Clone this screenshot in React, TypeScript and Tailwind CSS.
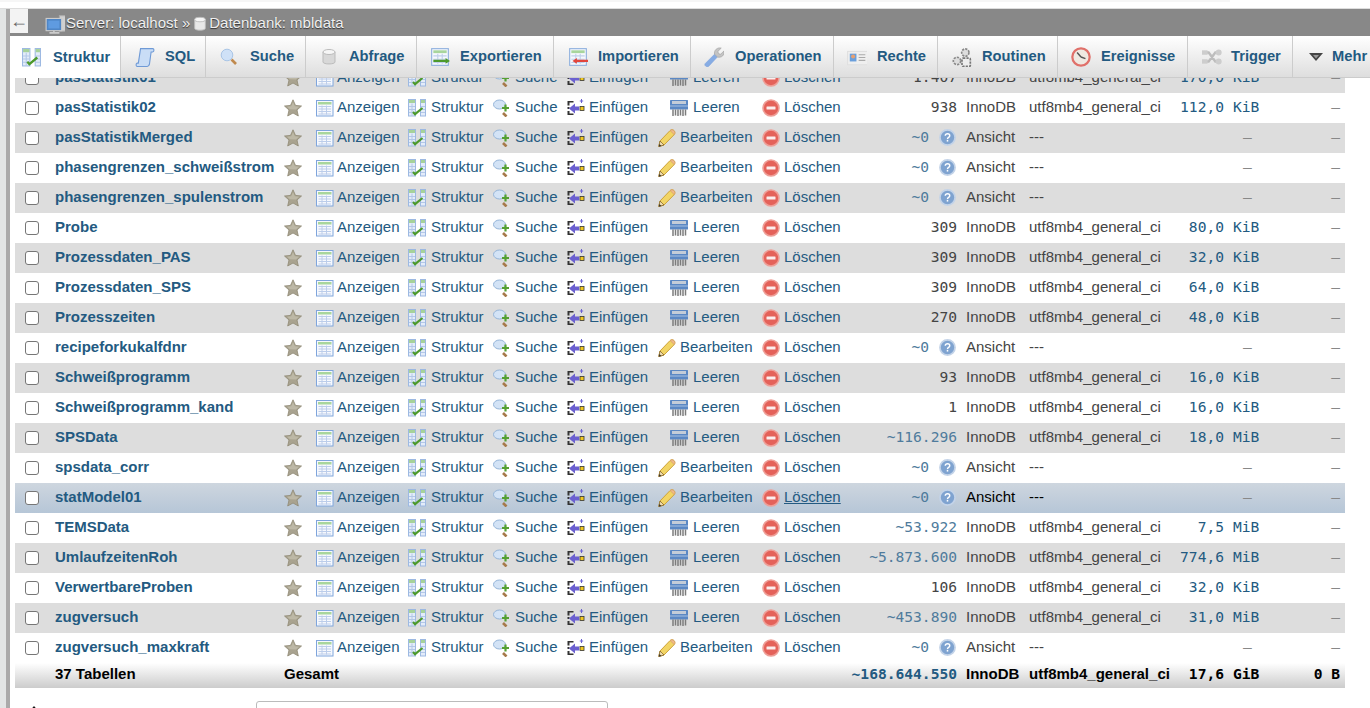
import type { ReactNode } from "react";

const Svg = ({ size = 18, children }: { size?: number; children: ReactNode }) => (
  <svg width={size} height={size} viewBox="0 0 18 18" className="shrink-0">
    {children}
  </svg>
);

// row action icons
const Star = () => (
  <Svg>
    <path d="M9 .8l2.500 5.600 6 .6-4.500 4 1.300 6L9 14l-5.300 3 1.300-6L.5 7l6-.6z" fill="#a9a390" stroke="#8f8973" strokeWidth=".8" />
    <path d="M9 3l1.800 4.300 4.300.4-3.200 2.800-5.900-.2-3-2.600 4.200-.4z" fill="#bdb8a6" />
  </Svg>
);

const Browse = () => (
  <Svg>
    <rect x=".5" y="1.500" width="16.500" height="15.500" fill="#f7f9fd" stroke="#7fa5dc" />
    <rect x="2" y="3" width="13.500" height="2.500" fill="#a9d69c" />
    <path d="M2.500 7.500h12.500M2.500 10h12.500M2.500 12.500h12.500M2.500 15h12.500M6 6.500v9M10.500 6.500v9" stroke="#bccdea" />
  </Svg>
);

const Props = ({ size = 18 }: { size?: number }) => (
  <Svg size={size}>
    <rect x=".5" y=".5" width="7" height="16.500" fill="#e3ecf9" stroke="#9db9e2" />
    <rect x="12.500" y=".5" width="5" height="16.500" fill="#e3ecf9" stroke="#9db9e2" />
    <rect x="1" y="1" width="6" height="3" fill="#a6d29a" />
    <rect x="13" y="1" width="4" height="3" fill="#a6d29a" />
    <path d="M4 4.500v12M1 7.500h6M1 10.500h6M1 13.500h6M13 7.500h4M13 10.500h4M13 13.500h4" stroke="#b3c8e8" />
    <path d="M5 13l2 2.200L14.500 9" fill="none" stroke="#4d9a2c" strokeWidth="2.200" />
  </Svg>
);

const Select = () => (
  <Svg>
    <ellipse cx="6.500" cy="5.500" rx="6" ry="4.500" fill="#d3e3f6" stroke="#94b4d8" />
    <path d="M10 14l3.500 3.500" stroke="#a6794a" strokeWidth="2.600" />
    <path d="M12.500 5.500v7M9 9h7" stroke="#54a032" strokeWidth="2.200" />
  </Svg>
);

const Insert = () => (
  <Svg>
    <path d="M.5 2h6v1.500h-4v3H.5zM.5 8h2v2h-2zM.5 12h2v2.500h4V16h-6z" fill="#333" />
    <path d="M2 9.500l6-5v3h4v4H8v3z" fill="#6b60d0" />
    <rect x="13" y="7.500" width="4" height="4" fill="#f0c820" stroke="#333" strokeWidth=".8" />
    <path d="M14.500 0v4M12.800 2h3.400" stroke="#6b60d0" />
  </Svg>
);

const Empty = () => (
  <Svg>
    <rect x="0" y="1" width="18" height="9.500" rx=".5" fill="#5b88c4" />
    <rect x="2" y="2" width="14" height="3" fill="#c3ccd8" />
    <rect x="0" y="6.500" width="18" height="1" fill="#a7c0e0" />
    <path d="M3 10.500v6.500M5.500 10.500v6M8 10.500v6.500M10.500 10.500v6M13 10.500v6.500M15.500 10.500v6" stroke="#7c7c7c" strokeWidth="1.500" />
  </Svg>
);

const Pencil = () => (
  <Svg>
    <path d="M.8 17.500l1.200-5.500L12 1.600c1.200-1.200 3-1 4 0s1.200 2.800.2 4L6 16z" fill="#f2d565" stroke="#cda23a" />
    <path d="M12 1.600l4.200 4c1-1.200.8-3-.2-4s-2.800-1.200-4 0z" fill="#efb98a" stroke="#d39b62" strokeWidth=".6" />
    <path d="M.8 17.500l1.200-5.500 4 4z" fill="#f0dcae" stroke="#7a5a20" strokeWidth=".7" />
    <path d="M.8 17.500l.6-2.500 1.900 1.900z" fill="#333" />
  </Svg>
);

const Drop = () => (
  <Svg>
    <circle cx="9" cy="9" r="8" fill="#e4625a" stroke="#ee9f98" strokeWidth="1.600" />
    <rect x="4.500" y="7.500" width="9" height="3" rx=".5" fill="#fbeeee" />
  </Svg>
);

const Help = () => (
  <Svg size={17}>
    <circle cx="9" cy="9" r="8" fill="#7fa3d0" stroke="#c3d3e8" strokeWidth="1.800" />
    <path d="M6.600 7.200c.2-2.800 4.800-2.800 4.800 0 0 1.700-2.400 1.700-2.400 3.300" fill="none" stroke="#fff" strokeWidth="1.500" />
    <rect x="8.200" y="11.500" width="1.600" height="1.800" fill="#fff" />
  </Svg>
);

// tab icons
const Scroll = () => (
  <Svg size={20}>
    <path d="M5 1.500h11c1.300 0 1.500 2.500 0 3h-1.500L13 15.500c-.3 1.500-1 2-2 2H2c-1.200 0-1.500-2.300 0-3h1z" fill="#c9ddf6" stroke="#6f9ad6" />
  </Svg>
);

const Magnifier = () => (
  <Svg size={18}>
    <circle cx="7" cy="7" r="5.800" fill="#cfe1f7" stroke="#a9c5e6" />
    <path d="M11.500 11.500l4.500 4.500" stroke="#c08a4e" strokeWidth="2.600" />
  </Svg>
);

const Cylinder = ({ size = 18, light = false }: { size?: number; light?: boolean }) => (
  <Svg size={size}>
    <path d="M3 4v10c0 2.600 12 2.600 12 0V4z" fill={light ? "#e8e8e8" : "#d8d8d8"} stroke="#bbb" />
    <ellipse cx="9" cy="4" rx="6" ry="2.500" fill="#f6f6f6" stroke="#bbb" />
  </Svg>
);

const SheetArrow = ({ color, out }: { color: string; out: boolean }) => (
  <Svg size={20}>
    <rect x="1.500" y="1.500" width="15" height="15" fill="#f5f8fd" stroke="#8fb0de" />
    <rect x="3" y="3" width="12" height="2.500" fill="#a8d59c" />
    <path d="M3 8h12M3 11h12M3 14h12M7 6v9M11 6v9" stroke="#c0d0ea" />
    {out ? (
      <path d="M3 11.500h11V10l4 2.500-4 2.500v-1.500H3z" fill={color} />
    ) : (
      <path d="M18 11.500H8V10l-4 2.500L8 15v-1.500h10z" fill={color} />
    )}
  </Svg>
);

const Wrench = () => (
  <Svg size={20}>
    <path d="M1 15L9.500 6.500l2.500 2.500-8 8.500c-1.500 1-4-.8-3-2.500z" fill="#86ace4" stroke="#7ba2dc" strokeWidth=".6" />
    <path d="M9.500 6.500c-.8-3.500 2.500-6.500 6-5.500l-3 3 .5 2 2 .5 3-3c.8 3.800-2.300 6.500-5.800 5.500z" fill="#c4c4c4" stroke="#a2a2a2" strokeWidth=".6" />
  </Svg>
);

const IdCard = () => (
  <Svg size={20}>
    <rect x=".5" y="4" width="18" height="12" fill="#efefef" stroke="#e0e0e0" />
    <rect x="2.500" y="6" width="6" height="7" fill="#6a9fdc" />
    <circle cx="5.500" cy="8.500" r="1.800" fill="#e8a070" />
    <path d="M10.500 7h6M10.500 9.500h6M10.500 12h6" stroke="#aaa" />
  </Svg>
);

const Gears = () => (
  <Svg size={20}>
    <circle cx="12" cy="5" r="3.300" fill="#ddd" stroke="#888" strokeWidth="1.500" strokeDasharray="2 1" />
    <circle cx="4.500" cy="12.500" r="3.300" fill="#ddd" stroke="#888" strokeWidth="1.500" strokeDasharray="2 1" />
    <rect x="9" y="10" width="7.500" height="7.500" rx="1" fill="#eee" stroke="#777" strokeWidth="1.500" strokeDasharray="2 1" />
  </Svg>
);

const Clock = () => (
  <Svg size={20}>
    <circle cx="9" cy="9" r="7.800" fill="#efe9e2" stroke="#e0706a" strokeWidth="2" />
    <path d="M9 9L5.500 5M9 9l4 1.500" stroke="#555" strokeWidth="1.300" />
  </Svg>
);

const TriggerIcon = () => (
  <Svg size={20}>
    <path d="M3 5h3l6 8h3M3 13h3l6-8h3" fill="none" stroke="#bdbdbd" strokeWidth="2.200" />
    <rect x="0" y="3" width="5" height="4" fill="#cdcdcd" />
    <rect x="0" y="11" width="5" height="4" fill="#cdcdcd" />
    <circle cx="15" cy="5" r="2.700" fill="#cdcdcd" />
    <circle cx="15" cy="13" r="2.700" fill="#cdcdcd" />
  </Svg>
);

const Server = () => (
  <Svg size={20}>
    <rect x="13" y="1.500" width="5.500" height="14" fill="#d0d0d0" stroke="#aaa" />
    <rect x="1" y="4" width="14" height="11" fill="#4f86c6" stroke="#ccc" />
    <rect x="3" y="6" width="10" height="7" fill="#5f9be0" />
    <path d="M4 17h9M8 15v2" stroke="#ccc" strokeWidth="1.500" />
  </Svg>
);

const tabs: { label: string; width: string; gap: string; pad: string; icon: ReactNode }[] = [
  { label: "Struktur", width: "w-[111px]", gap: "gap-[12px]", pad: "pl-[12px]", icon: <Props size={19} /> },
  { label: "SQL", width: "w-[85px]", gap: "gap-[10px]", pad: "pl-[14px]", icon: <Scroll /> },
  { label: "Suche", width: "w-[100px]", gap: "gap-[12px]", pad: "pl-[14px]", icon: <Magnifier /> },
  { label: "Abfrage", width: "w-[111px]", gap: "gap-[11px]", pad: "pl-[14px]", icon: <Cylinder /> },
  { label: "Exportieren", width: "w-[137px]", gap: "gap-[10px]", pad: "pl-[13px]", icon: <SheetArrow color="#4d9a2c" out /> },
  { label: "Importieren", width: "w-[137px]", gap: "gap-[10px]", pad: "pl-[14px]", icon: <SheetArrow color="#e2453c" out={false} /> },
  { label: "Operationen", width: "w-[143px]", gap: "gap-[11px]", pad: "pl-[13px]", icon: <Wrench /> },
  { label: "Rechte", width: "w-[104px]", gap: "gap-[10px]", pad: "pl-[13px]", icon: <IdCard /> },
  { label: "Routinen", width: "w-[120px]", gap: "gap-[10px]", pad: "pl-[14px]", icon: <Gears /> },
  { label: "Ereignisse", width: "w-[130px]", gap: "gap-[10px]", pad: "pl-[13px]", icon: <Clock /> },
  { label: "Trigger", width: "w-[105px]", gap: "gap-[9px]", pad: "pl-[14px]", icon: <TriggerIcon /> },
  {
    label: "Mehr",
    width: "w-[78px]",
    gap: "gap-[9px]",
    pad: "pl-[16px]",
    icon: (
      <svg width="14" height="10" viewBox="0 0 14 10" className="shrink-0">
        <path d="M0 1h14L7 9z" fill="#444" />
        <path d="M4 3h6L7 6.500z" fill="#999" />
      </svg>
    ),
  },
];

type Row = { name: string; rows?: string; size?: string; unit?: string; approx?: boolean; hover?: boolean };

const data: Row[] = [
  { name: "pasStatistik01", rows: "1.407", size: "170,0", unit: "KiB" },
  { name: "pasStatistik02", rows: "938", size: "112,0", unit: "KiB" },
  { name: "pasStatistikMerged" },
  { name: "phasengrenzen_schweißstrom" },
  { name: "phasengrenzen_spulenstrom" },
  { name: "Probe", rows: "309", size: "80,0", unit: "KiB" },
  { name: "Prozessdaten_PAS", rows: "309", size: "32,0", unit: "KiB" },
  { name: "Prozessdaten_SPS", rows: "309", size: "64,0", unit: "KiB" },
  { name: "Prozesszeiten", rows: "270", size: "48,0", unit: "KiB" },
  { name: "recipeforkukalfdnr" },
  { name: "Schweißprogramm", rows: "93", size: "16,0", unit: "KiB" },
  { name: "Schweißprogramm_kand", rows: "1", size: "16,0", unit: "KiB" },
  { name: "SPSData", rows: "~116.296", size: "18,0", unit: "MiB", approx: true },
  { name: "spsdata_corr" },
  { name: "statModel01", hover: true },
  { name: "TEMSData", rows: "~53.922", size: "7,5", unit: "MiB", approx: true },
  { name: "UmlaufzeitenRoh", rows: "~5.873.600", size: "774,6", unit: "MiB", approx: true },
  { name: "VerwertbareProben", rows: "106", size: "32,0", unit: "KiB" },
  { name: "zugversuch", rows: "~453.890", size: "31,0", unit: "MiB", approx: true },
  { name: "zugversuch_maxkraft" },
];

const Action = ({ icon, label, gap = "gap-[4px]", className = "", underline = false }: { icon: ReactNode; label: string; gap?: string; className?: string; underline?: boolean }) => (
  <td className={className}>
    <span className={`flex items-center text-[#235a81] whitespace-nowrap ${gap}`}>
      {icon}
      <span className={underline ? "underline" : ""}>{label}</span>
    </span>
  </td>
);

const mono = "font-['DejaVu_Sans_Mono',monospace] text-[14.6px]";

function TableRow({ row, index }: { row: Row; index: number }) {
  const bg = row.hover
    ? "bg-gradient-to-b from-[#ced6df] to-[#b6c6d7]"
    : index % 2 === 0
      ? "bg-[#dddddd]"
      : "bg-white";
  const isView = !row.rows;
  return (
    <tr className={`h-[30px] [&>td]:pb-[2px] [&_svg]:translate-y-px ${bg}`}>
      <td className="pl-[10px]">
        <span className="block size-[14px] translate-y-px rounded-[3px] border border-[#767676] bg-white" />
      </td>
      <td className="font-bold text-[#235a81] whitespace-nowrap">{row.name}</td>
      <td>
        <Star />
      </td>
      <Action icon={<Browse />} label="Anzeigen" gap="gap-[3px]" />
      <Action icon={<Props />} label="Struktur" gap="gap-[5px]" />
      <Action icon={<Select />} label="Suche" />
      <Action icon={<Insert />} label="Einfügen" />
      {isView ? (
        <Action icon={<Pencil />} label="Bearbeiten" />
      ) : (
        <Action icon={<Empty />} label="Leeren" gap="gap-[5px]" className="pl-[12px]" />
      )}
      <Action icon={<Drop />} label="Löschen" underline={row.hover} />
      <td className={`text-right ${mono} ${row.approx || isView ? "text-[#4f7b9c]" : "text-[#444]"}`}>
        {isView ? (
          <span className="flex items-center justify-end gap-[10px] pr-[1px]">
            ~0
            <Help />
          </span>
        ) : (
          row.rows
        )}
      </td>
      <td className={`pl-[9px] ${row.hover ? "text-black" : "text-[#444]"}`}>{isView ? "Ansicht" : "InnoDB"}</td>
      <td className={row.hover ? "text-black" : "text-[#444]"}>{isView ? "---" : "utf8mb4_general_ci"}</td>
      {isView ? (
        <td colSpan={2} className={`pl-[73px] ${mono} text-[#888]`}>
          –
        </td>
      ) : (
        <>
          <td className={`text-right ${mono} text-[#235a81]`}>{row.size}</td>
          <td className={`pl-[9px] ${mono} text-[#235a81]`}>{row.unit}</td>
        </>
      )}
      <td className={`text-right pr-[5px] ${mono} text-[#888]`}>–</td>
    </tr>
  );
}

export default function App() {
  return (
    <div className="h-[708px] overflow-hidden bg-white font-['Liberation_Sans',Arial,sans-serif] text-[15px] text-[#444]">
      <div className="h-[2px] w-[1230px] bg-[#f6f6f6]" />
      <div className="h-[7px] border-b border-[#dddddd]" />
      <div className="flex h-[699px]">
        <div className="w-[6px] shrink-0 bg-[#e2e5e5]" />
        <div className="w-[4px] shrink-0 bg-[#aaaaaa]" />
        <div className="flex min-w-0 flex-1 flex-col">
          <div className="flex h-[27px] shrink-0 bg-[#888888] text-[#f0f0f0] [text-shadow:0_1px_1px_#333]">
            <div className="flex h-[24px] w-[18px] items-center justify-center bg-[#f3f3f3] font-['Liberation_Serif',serif] text-[18px] text-[#666] [text-shadow:none]">←</div>
            <div className="ml-[17px] flex items-center gap-[1px] pt-[2px]">
              <Server />
              <span>Server: localhost »</span>
              <span className="ml-[1px]">
                <Cylinder size={16} light />
              </span>
              <span>Datenbank: mbldata</span>
            </div>
          </div>
          <div className="flex h-[42px] shrink-0 text-[#235a81]">
            {tabs.map((tab, i) => (
              <div
                key={tab.label}
                className={`flex shrink-0 items-center border-r border-[#cccccc] text-[14.7px] font-bold ${tab.width} ${tab.gap} ${tab.pad} ${
                  i === 0 ? "bg-white" : "border-b border-b-[#cccccc] bg-gradient-to-b from-white to-[#dedede]"
                }`}
              >
                {tab.icon}
                <span className="whitespace-nowrap">{tab.label}</span>
              </div>
            ))}
          </div>
          <div className="min-h-0 flex-1 overflow-hidden pl-[5px]">
            <table className="-mt-[15px] w-[1330px] table-fixed border-collapse">
              <colgroup>
                <col className="w-[40px]" />
                <col className="w-[229px]" />
                <col className="w-[32px]" />
                <col className="w-[92px]" />
                <col className="w-[85px]" />
                <col className="w-[74px]" />
                <col className="w-[91px]" />
                <col className="w-[104px]" />
                <col className="w-[86px]" />
                <col className="w-[109px]" />
                <col className="w-[72px]" />
                <col className="w-[141px]" />
                <col className="w-[54px]" />
                <col className="w-[57px]" />
                <col className="w-[64px]" />
              </colgroup>
              <tbody>
                {data.map((row, i) => (
                  <TableRow key={row.name} row={row} index={i} />
                ))}
                <tr className="h-[24px] bg-gradient-to-b from-white to-[#cccccc] font-bold text-black [&>td]:pb-[2px]">
                  <td />
                  <td>37 Tabellen</td>
                  <td colSpan={7}>Gesamt</td>
                  <td className={`text-right ${mono} text-[#235a81]`}>~168.644.550</td>
                  <td className="pl-[9px]">InnoDB</td>
                  <td className="whitespace-nowrap">utf8mb4_general_ci</td>
                  <td className={`text-right ${mono}`}>17,6</td>
                  <td className={`pl-[9px] ${mono}`}>GiB</td>
                  <td className={`text-right pr-[5px] ${mono}`}>0 B</td>
                </tr>
              </tbody>
            </table>
            <div className="mt-[13px] flex items-start">
              <svg width="12" height="8" viewBox="0 0 12 8" className="ml-[13px] mt-[5px] shrink-0">
                <path d="M6 0l5 6H1z" fill="#111" />
              </svg>
              <span className="ml-[43px] mt-[7px] block h-[14px] w-[13px] shrink-0 rounded-[2px] border border-[#888]" />
              <span className="ml-[160px] block h-[30px] w-[352px] shrink-0 rounded-[3px] border border-[#bbbbbb]" />
            </div>
          </div>
        </div>
      </div>
    </div>
  );
}
